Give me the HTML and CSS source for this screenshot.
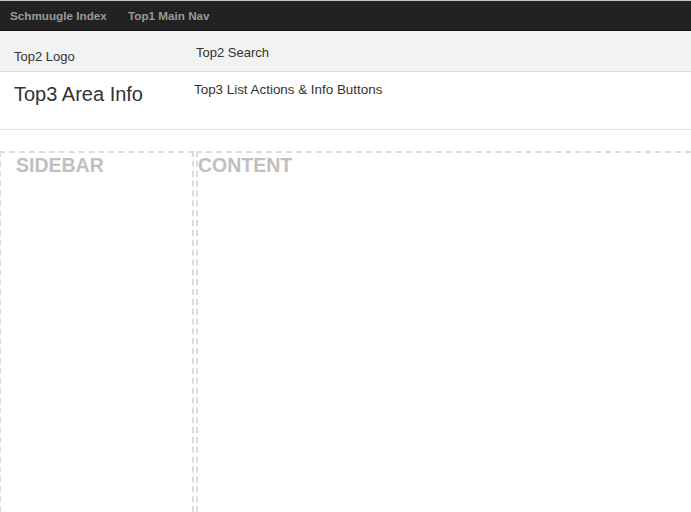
FILE: index.html
```html
<!DOCTYPE html>
<html>
<head>
<meta charset="utf-8">
<link rel="stylesheet" href="styles.css">
</head>
<body>
<div class="top1">
  <a class="brand">Schmuugle Index</a>
  <a class="nav-item">Top1 Main Nav</a>
</div>
<div class="top2">
  <div class="logo">Top2 Logo</div>
  <div class="search">Top2 Search</div>
</div>
<div class="top3">
  <div class="area">Top3 Area Info</div>
  <div class="actions">Top3 List Actions &amp; Info Buttons</div>
</div>
<div class="main">
  <div class="sidebar"><h2 class="label">SIDEBAR</h2></div>
  <div class="content"><h2 class="label">CONTENT</h2></div>
</div>
</body>
</html>
```
FILE: styles.css
```css
html, body {
  margin: 0;
  padding: 0;
  background: #fff;
  font-family: "Liberation Sans", Arial, sans-serif;
  color: #333;
  overflow: hidden;
}
.top1 {
  display: flex;
  height: 29px;
  background: #222;
  border-top: 1px solid #c8c8c8;
  border-bottom: 1px solid #111;
  font-size: 11.7px;
  font-weight: bold;
  line-height: 30px;
  color: #999;
}
.top1 a { display: block; }
.brand { padding-left: 10px; width: 118px; }
.top2 {
  display: flex;
  height: 40px;
  background: #f2f2f2;
  border-bottom: 1px solid #dcdcdc;
  font-size: 13px;
  line-height: 15px;
}
.logo { width: 182px; padding: 18px 0 0 14px; }
.search { padding-top: 14px; }
.top3 {
  display: flex;
  height: 57px;
  border-bottom: 1px solid #e4e4e4;
}
.area {
  width: 180px;
  padding: 11px 0 0 14px;
  font-size: 20px;
  line-height: 22px;
}
.actions {
  padding-top: 10px;
  font-size: 13.4px;
  line-height: 15px;
}
.main {
  display: flex;
  margin-top: 21px;
  margin-left: -1px;
  gap: 2px;
  height: 361px;
}
.sidebar {
  width: 191px;
  border: 2px dashed #dcdce0;
  border-bottom: none;
}
.content {
  flex: 1;
  border-top: 2px dashed #dcdce0;
  border-left: 2px dashed #dcdce0;
}
.label {
  margin: 0;
  padding-top: 1px;
  font-size: 19.5px;
  line-height: 22px;
  font-weight: bold;
  color: #c0c0c0;
}
.sidebar .label { padding-left: 15px; }
.content .label { padding-left: 0; }
```
